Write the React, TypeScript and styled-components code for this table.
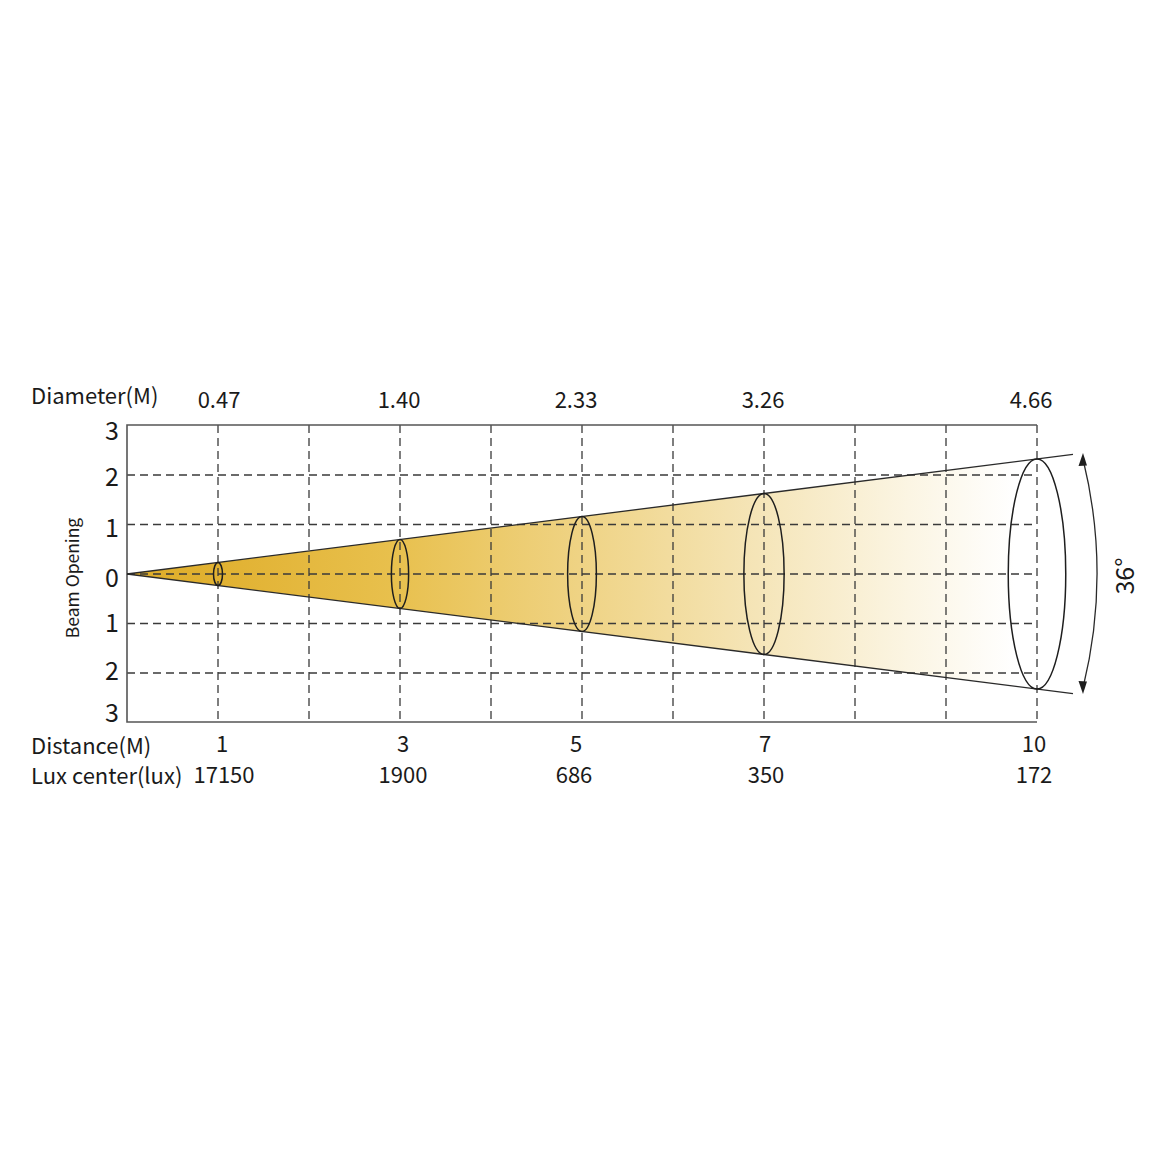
import styled, { createGlobalStyle } from 'styled-components'

const GlobalStyle = createGlobalStyle`
  html, body {
    margin: 0;
    padding: 0;
    background: #ffffff;
  }
`

// chart geometry (px in the viewBox)
const X0 = 127
const STEP = 91
const Y_TOP = 425
const Y_BOTTOM = 722
const Y_MID = 574
const ROW = 49.5
const SLOPE = 0.1264
const X_END = 1037
const X_RAY = 1073

const xAt = (d: number) => X0 + d * STEP

const diameters = [
  { x: 219, label: '0.47' },
  { x: 399, label: '1.40' },
  { x: 576, label: '2.33' },
  { x: 763, label: '3.26' },
  { x: 1031, label: '4.66' },
]

const distances = [
  { x: 222, d: '1', lux: '17150', luxX: 224 },
  { x: 403, d: '3', lux: '1900', luxX: 403 },
  { x: 576, d: '5', lux: '686', luxX: 574 },
  { x: 765, d: '7', lux: '350', luxX: 766 },
  { x: 1034, d: '10', lux: '172', luxX: 1034 },
]

const yLabels = [
  { y: 440, label: '3' },
  { y: 486, label: '2' },
  { y: 537, label: '1' },
  { y: 587, label: '0' },
  { y: 632, label: '1' },
  { y: 680, label: '2' },
  { y: 722, label: '3' },
]

const beamDistances = [1, 3, 5, 7, 10]

export default function App() {
  const rayTop = Y_MID - (X_RAY - X0) * SLOPE
  const rayBottom = Y_MID + (X_RAY - X0) * SLOPE
  const endHalf = (X_END - X0) * SLOPE

  return (
    <>
      <GlobalStyle />
      <Page>
        <Figure viewBox="0 375 1157 425" width={1157} height={425}>
          <defs>
            <linearGradient id="beam" gradientUnits="userSpaceOnUse" x1={X0} y1="0" x2={1015} y2="0">
              <stop offset="0" stopColor="#dead2a" />
              <stop offset="0.1" stopColor="#e1b131" />
              <stop offset="0.3" stopColor="#e8c04d" />
              <stop offset="0.51" stopColor="#efd384" />
              <stop offset="0.71" stopColor="#f5e5b8" />
              <stop offset="0.88" stopColor="#fbf5e3" />
              <stop offset="1" stopColor="#ffffff" />
            </linearGradient>
          </defs>

          <polygon
            points={`${X0},${Y_MID} ${X_END},${Y_MID - endHalf} ${X_END},${Y_MID + endHalf}`}
            fill="url(#beam)"
          />

          {/* grid */}
          {Array.from({ length: 10 }, (_, i) => (
            <GridLine key={`v${i}`} x1={xAt(i + 1)} y1={Y_TOP} x2={xAt(i + 1)} y2={Y_BOTTOM} />
          ))}
          {[-2, -1, 0, 1, 2].map(r => (
            <GridLine key={`h${r}`} x1={X0} y1={Y_MID + r * ROW} x2={X_END} y2={Y_MID + r * ROW} />
          ))}

          {/* frame */}
          <FrameLine d={`M${X_END} ${Y_TOP} H${X0} V${Y_BOTTOM} H${X_END}`} />

          {/* beam */}
          <BeamLine x1={X0} y1={Y_MID} x2={X_RAY} y2={rayTop} />
          <BeamLine x1={X0} y1={Y_MID} x2={X_RAY} y2={rayBottom} />
          {beamDistances.map(d => {
            const half = d * STEP * SLOPE
            return <BeamRing key={d} cx={xAt(d)} cy={Y_MID} rx={Math.max(4.5, half * 0.25)} ry={half} />
          })}

          {/* angle */}
          <BeamLine as="path" d="M1083 459 A480 480 0 0 1 1083 688" fill="none" />
          <ArrowHead points="1083,453 1078.5,466 1087,465.5" />
          <ArrowHead points="1083,694 1078.5,681 1087,681.5" />
          <AngleText x={1134} y={576} transform="rotate(-90 1134 576)">
            36°
          </AngleText>

          {/* axis texts */}
          <Title x={31} y={404}>
            Diameter(M)
          </Title>
          {diameters.map(v => (
            <Value key={v.label} x={v.x} y={408}>
              {v.label}
            </Value>
          ))}

          {yLabels.map((v, i) => (
            <AxisNumber key={i} x={119} y={v.y}>
              {v.label}
            </AxisNumber>
          ))}
          <SideTitle x={79} y={578} transform="rotate(-90 79 578)">
            Beam Opening
          </SideTitle>

          <Title x={31} y={754}>
            Distance(M)
          </Title>
          <Title x={31} y={784}>
            Lux center(lux)
          </Title>
          {distances.map(v => (
            <g key={v.d}>
              <Value x={v.x} y={752}>
                {v.d}
              </Value>
              <Value x={v.luxX} y={783}>
                {v.lux}
              </Value>
            </g>
          ))}
        </Figure>
      </Page>
    </>
  )
}

const Page = styled.div`
  width: 1157px;
  height: 1157px;
  padding-top: 375px;
  box-sizing: border-box;
  background: #ffffff;
  overflow: hidden;
`

const Figure = styled.svg`
  display: block;
  font-family: 'Noto Sans CJK SC', 'Noto Sans', sans-serif;
`

const GridLine = styled.line`
  stroke: #3a3a3a;
  stroke-width: 1.3;
  stroke-dasharray: 8 5;
`

const FrameLine = styled.path`
  fill: none;
  stroke: #555555;
  stroke-width: 1.6;
`

const BeamLine = styled.line`
  stroke: #2a2a2a;
  stroke-width: 1.3;
`

const BeamRing = styled.ellipse`
  fill: none;
  stroke: #1e1e1e;
  stroke-width: 1.5;
`

const ArrowHead = styled.polygon`
  fill: #1e1e1e;
`

const Title = styled.text`
  font-size: 22px;
  fill: #1a1a1a;
`

const Value = styled.text`
  font-size: 22px;
  fill: #1a1a1a;
  text-anchor: middle;
`

const AxisNumber = styled.text`
  font-size: 25px;
  fill: #1a1a1a;
  text-anchor: end;
`

const SideTitle = styled.text`
  font-size: 17.5px;
  fill: #1a1a1a;
  text-anchor: middle;
`

const AngleText = styled.text`
  font-size: 25px;
  fill: #1a1a1a;
  text-anchor: middle;
`
